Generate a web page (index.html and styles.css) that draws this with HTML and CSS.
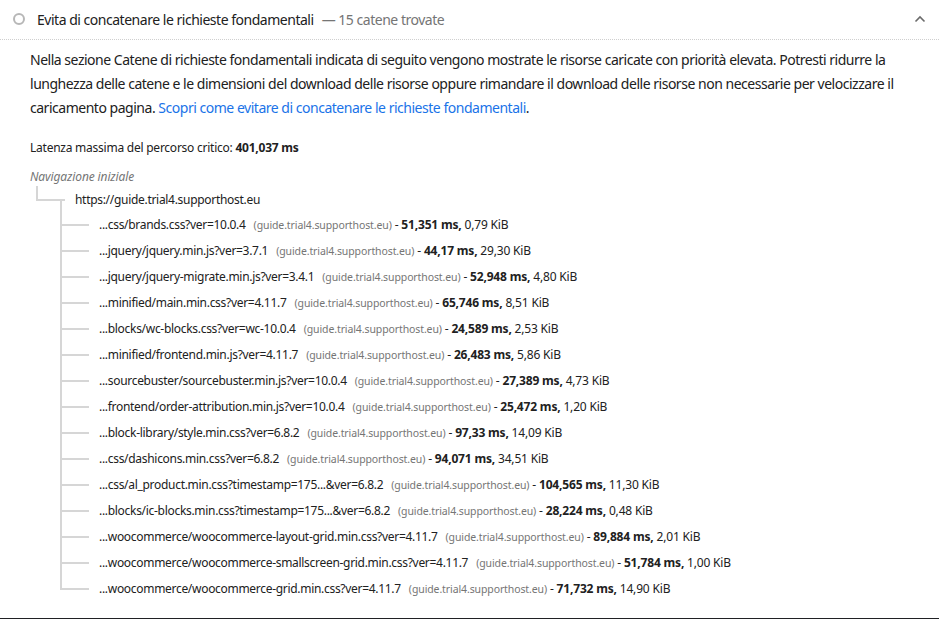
FILE: index.html
```html
<!DOCTYPE html>
<html lang="it">
<head>
    <meta charset="UTF-8">
    <meta name="viewport" content="width=device-width, initial-scale=1.0">
    <title>Catene di richieste fondamentali</title>
    <link rel="stylesheet" href="styles.css">
</head>
<body>
    <div class="audit">
        <div class="audit-header">
            <span class="audit-icon"></span>
            <span class="audit-title">Evita di concatenare le richieste fondamentali</span>
            <span class="audit-display">— 15 catene trovate</span>
            <svg class="audit-chevron" width="12" height="8" viewBox="0 0 12 8" aria-hidden="true">
                <path d="M1.5 6.5 L6 2 L10.5 6.5" fill="none" stroke="#6b6b6b" stroke-width="1.6"/>
            </svg>
        </div>

        <div class="audit-body">
            <p class="audit-description">
                Nella sezione Catene di richieste fondamentali indicata di seguito vengono mostrate le risorse caricate con priorità elevata. Potresti ridurre la lunghezza delle catene e le dimensioni del download delle risorse oppure rimandare il download delle risorse non necessarie per velocizzare il caricamento pagina. <a href="#">Scopri come evitare di concatenare le richieste fondamentali</a>.
            </p>

            <div class="crc-summary">Latenza massima del percorso critico: <b>401,037 ms</b></div>

            <div class="crc-initial">Navigazione iniziale</div>

            <div class="crc-tree">
                <div class="crc-root">
                    <span class="crc-marker"></span>
                    <span class="crc-url">https://guide.trial4.supporthost.eu</span>
                </div>
                <ul class="crc-children" id="chain"></ul>
            </div>
        </div>
    </div>

    <script>
        const chains = [
            ['...css/brands.css?ver=10.0.4', '51,351 ms', '0,79 KiB'],
            ['...jquery/jquery.min.js?ver=3.7.1', '44,17 ms', '29,30 KiB'],
            ['...jquery/jquery-migrate.min.js?ver=3.4.1', '52,948 ms', '4,80 KiB'],
            ['...minified/main.min.css?ver=4.11.7', '65,746 ms', '8,51 KiB'],
            ['...blocks/wc-blocks.css?ver=wc-10.0.4', '24,589 ms', '2,53 KiB'],
            ['...minified/frontend.min.js?ver=4.11.7', '26,483 ms', '5,86 KiB'],
            ['...sourcebuster/sourcebuster.min.js?ver=10.0.4', '27,389 ms', '4,73 KiB'],
            ['...frontend/order-attribution.min.js?ver=10.0.4', '25,472 ms', '1,20 KiB'],
            ['...block-library/style.min.css?ver=6.8.2', '97,33 ms', '14,09 KiB'],
            ['...css/dashicons.min.css?ver=6.8.2', '94,071 ms', '34,51 KiB'],
            ['...css/al_product.min.css?timestamp=175...&ver=6.8.2', '104,565 ms', '11,30 KiB'],
            ['...blocks/ic-blocks.min.css?timestamp=175...&ver=6.8.2', '28,224 ms', '0,48 KiB'],
            ['...woocommerce/woocommerce-layout-grid.min.css?ver=4.11.7', '89,884 ms', '2,01 KiB'],
            ['...woocommerce/woocommerce-smallscreen-grid.min.css?ver=4.11.7', '51,784 ms', '1,00 KiB'],
            ['...woocommerce/woocommerce-grid.min.css?ver=4.11.7', '71,732 ms', '14,90 KiB']
        ];

        const list = document.getElementById('chain');
        chains.forEach(([url, time, size]) => {
            const li = document.createElement('li');
            li.className = 'crc-node';

            const u = document.createElement('span');
            u.className = 'crc-url';
            u.textContent = url;

            const host = document.createElement('span');
            host.className = 'crc-host';
            host.textContent = '(guide.trial4.supporthost.eu)';

            const t = document.createElement('b');
            t.textContent = time + ',';

            li.append(u, host, ' - ', t, ' ' + size);
            list.appendChild(li);
        });
    </script>
</body>
</html>
```

FILE: styles.css
```css
:root {
    --text-color: #212121;
    --muted-color: #757575;
    --link-color: #1a73e8;
    --tree-line: #d6d6d6;
}

* {
    box-sizing: border-box;
}

body {
    margin: 0;
    font-family: "Noto Sans", "Open Sans", sans-serif;
    letter-spacing: -0.03em;
    color: var(--text-color);
    background: #fff;
}

.audit {
    border-bottom: 1px solid #202124;
    padding-bottom: 16px;
}

.audit-header {
    display: flex;
    align-items: center;
    height: 40px;
    padding: 0 13px 1px 13px;
    border-bottom: 1px dotted #cfcfcf;
    font-size: 14px;
}

.audit-icon {
    width: 12px;
    height: 12px;
    border: 2px solid #b7b7b7;
    border-radius: 50%;
    margin-right: 12px;
}

.audit-display {
    color: var(--muted-color);
    margin-left: 8px;
}

.audit-chevron {
    margin-left: auto;
}

.audit-body {
    padding: 8px 30px 0 30px;
}

.audit-description {
    margin: 0;
    font-size: 14px;
    line-height: 24px;
}

.audit-description a {
    color: var(--link-color);
    text-decoration: none;
}

.crc-summary {
    margin-top: 19px;
    font-size: 12px;
    line-height: 18px;
    letter-spacing: -0.02em;
}

.crc-initial {
    margin-top: 11px;
    font-size: 12px;
    line-height: 18px;
    font-style: italic;
    letter-spacing: -0.01em;
    color: var(--muted-color);
}

.crc-tree {
    font-size: 12px;
    letter-spacing: -0.015em;
}

.crc-url {
    letter-spacing: -0.025em;
}

.crc-root {
    display: flex;
    height: 26px;
    align-items: center;
}

.crc-marker {
    align-self: flex-start;
    width: 29px;
    height: 15px;
    margin-left: 6px;
    margin-right: 10px;
    border-left: 2px solid var(--tree-line);
    border-bottom: 2px solid var(--tree-line);
}

.crc-children {
    list-style: none;
    margin: 0 0 0 30px;
    padding: 0;
}

.crc-node {
    position: relative;
    height: 26px;
    line-height: 26px;
    padding-left: 39px;
    white-space: nowrap;
}

/* connectors */
.crc-node::before {
    content: "";
    position: absolute;
    left: 0;
    top: 0;
    height: 100%;
    border-left: 2px solid var(--tree-line);
}

.crc-node:first-child::before {
    top: -13px;
    height: calc(100% + 13px);
}

.crc-node:last-child::before {
    height: 14px;
}

.crc-node::after {
    content: "";
    position: absolute;
    left: 0;
    top: 12px;
    width: 29px;
    border-top: 2px solid var(--tree-line);
}

.crc-host {
    margin-left: 8px;
    font-size: 10.5px;
    letter-spacing: -0.01em;
    color: var(--muted-color);
}
```
